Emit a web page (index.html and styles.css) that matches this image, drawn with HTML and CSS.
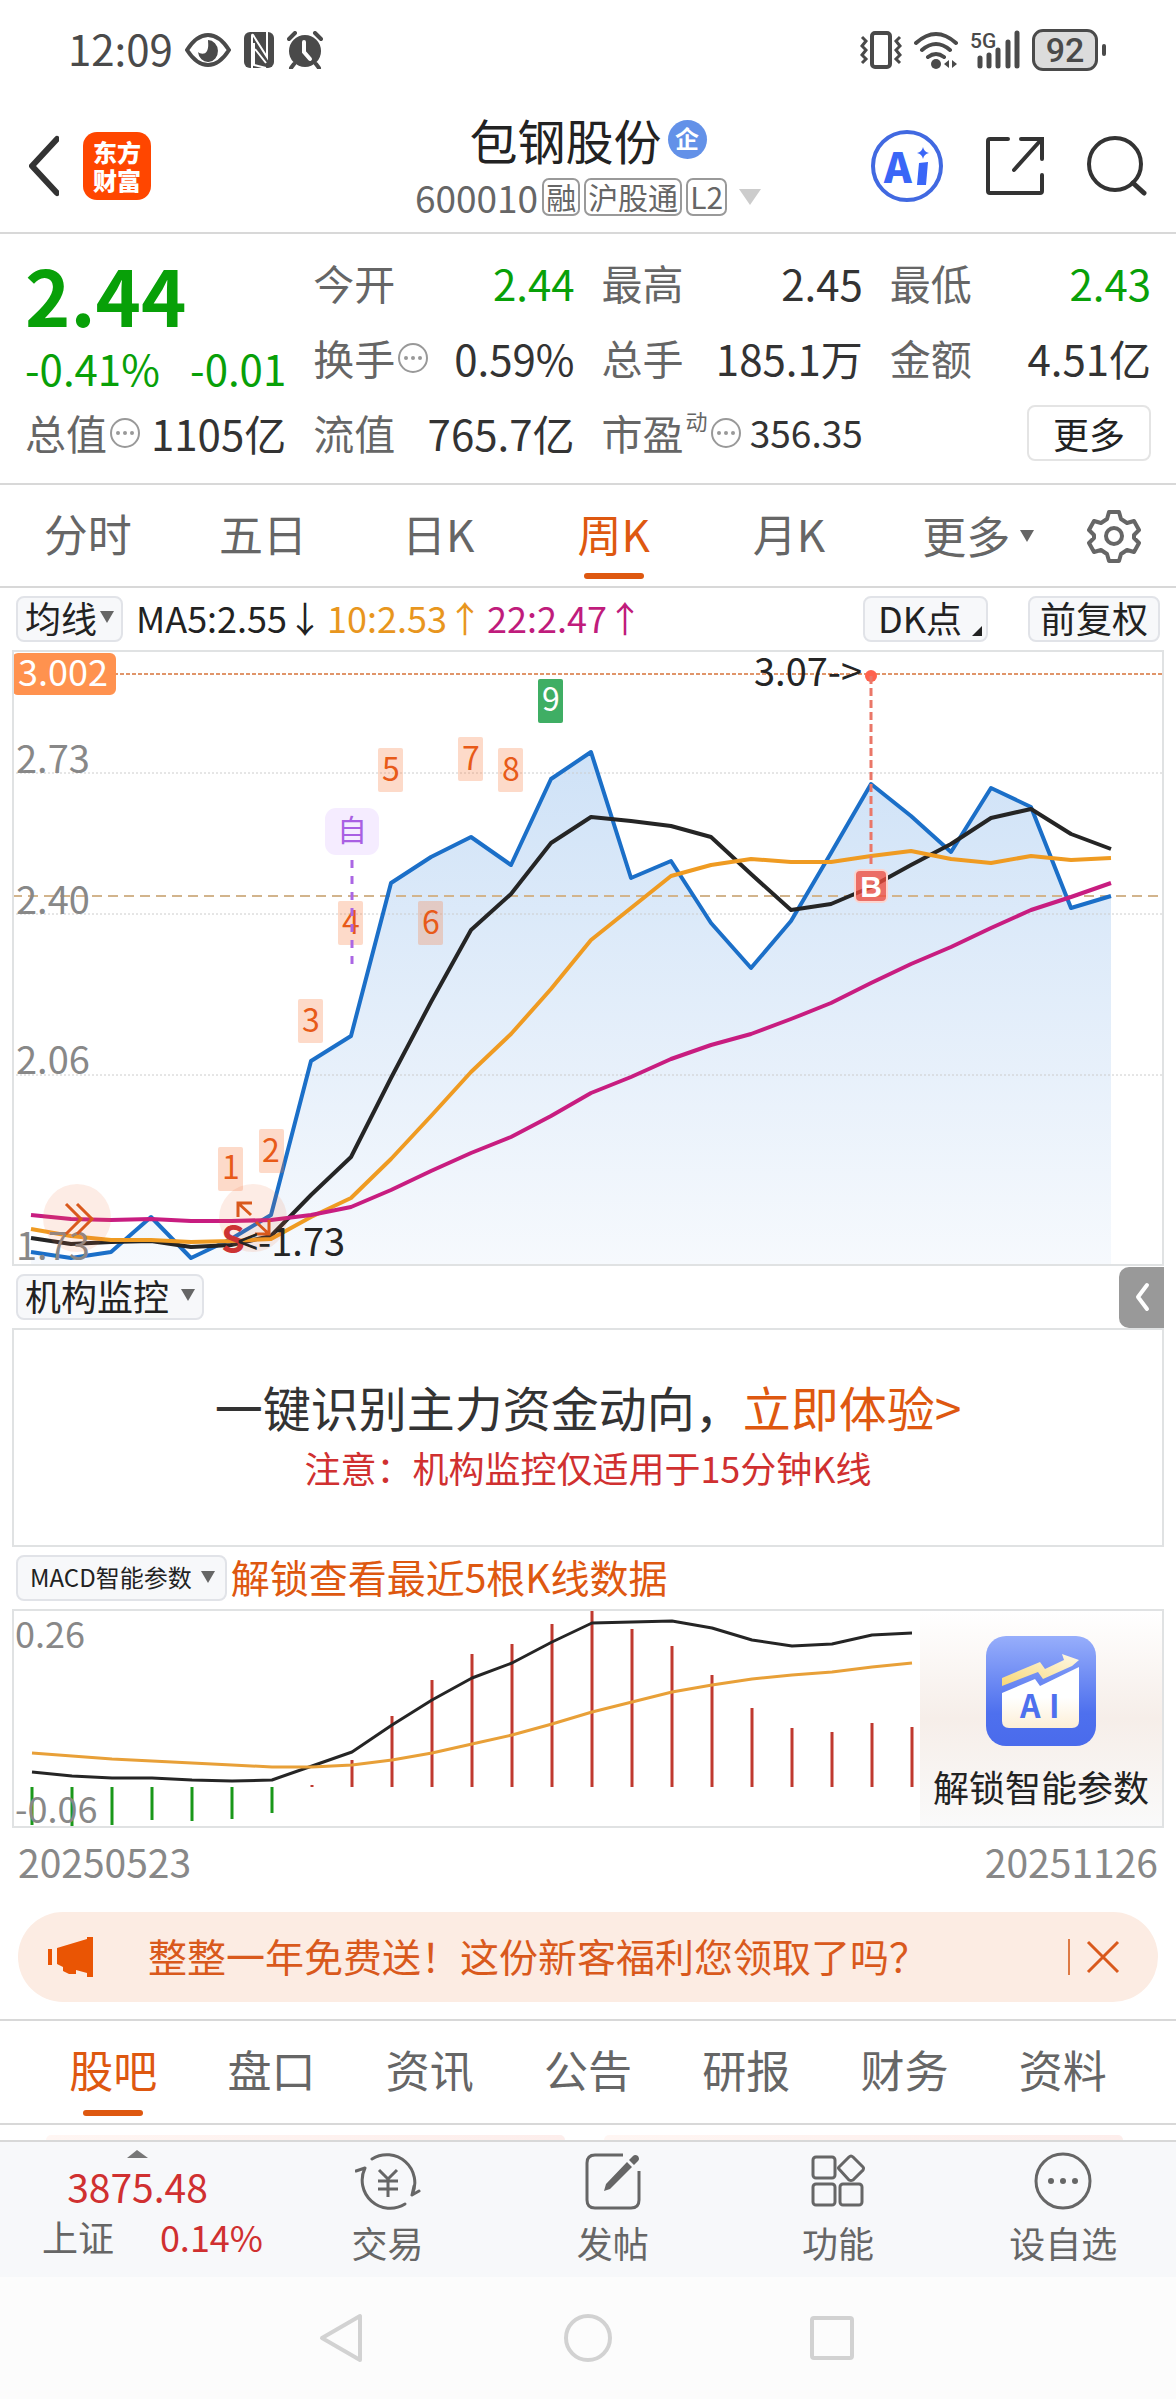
FILE: index.html
```html
<!DOCTYPE html>
<html lang="zh-CN">
<head>
<meta charset="utf-8">
<meta name="viewport" content="width=device-width, initial-scale=1">
<title>包钢股份 600010</title>
<link rel="stylesheet" href="styles.css">
</head>
<body>
<svg class="defs" aria-hidden="true">
  <symbol id="info" viewBox="0 0 32 32"><circle cx="16" cy="16" r="14" fill="none" stroke="#999" stroke-width="2"/><circle cx="9" cy="16" r="2" fill="#999"/><circle cx="16" cy="16" r="2" fill="#999"/><circle cx="23" cy="16" r="2" fill="#999"/></symbol>
  <symbol id="caret" viewBox="0 0 14 12"><path d="M0 0h14L7 12z" fill="#666"/></symbol>
</svg>

<div class="status">
  <div class="status-side">
    <span class="clock">12:09</span>
    <svg width="46" height="36" viewBox="0 0 46 36"><path d="M2 18C9 7 16 3 23 3s14 4 21 15c-7 11-14 15-21 15S9 29 2 18z" fill="none" stroke="#4a4a4a" stroke-width="4"/><path d="M23 8a10 11 0 1 1-10 12c2 2 7 3 9-1 2-4 1-8 1-11z" fill="#4a4a4a"/></svg>
    <svg width="32" height="38" viewBox="0 0 32 38"><rect x="1" y="1" width="30" height="36" rx="6" fill="#4a4a4a"/><path d="M9 37V5q0-2 1-1l14 22V1" fill="none" stroke="#fff" stroke-width="2"/><path d="M11 12v22l12 3M12 18l11 14" fill="none" stroke="#fff" stroke-width="2"/></svg>
    <svg width="36" height="38" viewBox="0 0 36 38"><circle cx="18" cy="20" r="16" fill="#4a4a4a"/><path d="M2 8l6-6M34 8l-6-6M7 33l-3 4M29 33l3 4" stroke="#4a4a4a" stroke-width="4" stroke-linecap="round"/><path d="M17 11v10l6 7" fill="none" stroke="#fff" stroke-width="4" stroke-linecap="round"/></svg>
  </div>
  <div class="status-side">
    <svg width="42" height="40" viewBox="0 0 42 40"><rect x="12" y="3" width="18" height="34" rx="3" fill="none" stroke="#4a4a4a" stroke-width="4"/><path d="M2 7l4 4-4 5 4 4-4 5 4 4-4 4M40 7l-4 4 4 5-4 4 4 5-4 4 4 4" fill="none" stroke="#4a4a4a" stroke-width="3"/></svg>
    <svg width="44" height="40" viewBox="0 0 44 40"><path d="M2 13q20-18 40 0M8 20q14-12 28 0M14 27q8-6 16 0" fill="none" stroke="#4a4a4a" stroke-width="4" stroke-linecap="round"/><circle cx="22" cy="34" r="5" fill="#4a4a4a"/><path d="M35 30v8l-5-4zM38 30v8l5-4z" fill="#4a4a4a"/></svg>
    <svg width="50" height="40" viewBox="0 0 50 40"><text x="0" y="18" class="net">5G</text><path d="M10 28v8M19 25v11M28 20v16M38 12v24M47 3v33" stroke="#4a4a4a" stroke-width="5" stroke-linecap="round"/></svg>
    <span class="battery">92</span><i class="battery-cap"></i>
  </div>
</div>

<header class="head">
  <div class="head-left">
    <button class="icon-btn" aria-label="返回"><svg width="30" height="62" viewBox="4 0 30 62"><path d="M30 4L5 31l25 27" fill="none" stroke="#333" stroke-width="6" stroke-linecap="round" stroke-linejoin="round" transform="translate(2 0)"/></svg></button>
    <a class="logo" href="#">东方<br>财富</a>
  </div>
  <div class="head-mid">
    <h1>包钢股份<span class="corp">企</span></h1>
    <p class="code">600010<span class="tag">融</span><span class="tag">沪股通</span><span class="tag">L2</span><svg width="22" height="16" viewBox="0 0 22 16"><path d="M0 0h22L11 16z" fill="#ccc"/></svg></p>
  </div>
  <div class="head-right">
    <button class="icon-btn" aria-label="AI"><svg width="72" height="72" viewBox="0 0 72 72"><circle cx="36" cy="36" r="34" fill="none" stroke="#4169e1" stroke-width="4"/><text x="13" y="53" class="ai">A</text><path d="M48 33l9-1-2 23h-9z" fill="#3a66f7"/><path d="M52 17q1 5 6 6-5 1-6 6-1-5-6-6 5-1 6-6z" fill="#3a66f7"/></svg></button>
    <button class="icon-btn" aria-label="分享"><svg width="58" height="60" viewBox="0 0 58 60"><path d="M22 3H4q-2 0-2 2v50q0 2 2 2h50q2 0 2-2V39M35 3h21v20M54 5L28 34" fill="none" stroke="#333" stroke-width="4" stroke-linecap="round"/></svg></button>
    <button class="icon-btn" aria-label="搜索"><svg width="60" height="60" viewBox="0 0 60 60"><circle cx="28" cy="28" r="26" fill="none" stroke="#333" stroke-width="4"/><path d="M46 47l11 10" stroke="#333" stroke-width="5" stroke-linecap="round"/></svg></button>
  </div>
</header>

<section class="quote">
  <div class="price">
    <strong>2.44</strong>
    <p><span>-0.41%</span><span>-0.01</span></p>
  </div>
  <div class="stat"><span>今开</span><b class="down">2.44</b></div>
  <div class="stat"><span>最高</span><b>2.45</b></div>
  <div class="stat"><span>最低</span><b class="down">2.43</b></div>
  <div class="stat"><span>换手<svg class="info"><use href="#info"/></svg></span><b>0.59%</b></div>
  <div class="stat"><span>总手</span><b>185.1万</b></div>
  <div class="stat"><span>金额</span><b>4.51亿</b></div>
  <div class="stat"><span>总值<svg class="info"><use href="#info"/></svg></span><b>1105亿</b></div>
  <div class="stat"><span>流值</span><b>765.7亿</b></div>
  <div class="stat"><span>市盈<sup>动</sup><svg class="info"><use href="#info"/></svg></span><b class="small">356.35</b></div>
  <div class="stat end"><button class="more">更多</button></div>
</section>

<nav class="periods">
  <a href="#">分时</a><a href="#">五日</a><a href="#">日K</a><a href="#" class="on">周K</a><a href="#">月K</a>
  <a href="#" class="wide">更多<svg class="caret"><use href="#caret"/></svg></a>
  <button class="icon-btn" aria-label="设置"><svg width="54" height="54" viewBox="0 0 54 54"><path d="M22 3h10l2 7 6 4 7-2 5 9-5 5v3l5 5-5 9-7-2-6 4-2 7H22l-2-7-6-4-7 2-5-9 5-5v-3l-5-5 5-9 7 2 6-4z" fill="none" stroke="#666" stroke-width="4" stroke-linejoin="round"/><circle cx="27" cy="27" r="8" fill="none" stroke="#666" stroke-width="4"/></svg></button>
</nav>

<div class="bar">
  <button class="chip">均线<svg class="caret"><use href="#caret"/></svg></button>
  <p class="ma"><span>MA5:2.55↓</span><span class="c-orange">10:2.53↑</span><span class="c-pink">22:2.47↑</span></p>
  <button class="chip dk">DK点<svg width="10" height="10" viewBox="0 0 10 10"><path d="M10 0v10H0z" fill="#222"/></svg></button>
  <button class="chip adj">前复权</button>
</div>

<div class="panel">
  <svg class="plot" viewBox="14 653 1148 612" role="img" aria-label="周K走势">
    <defs><linearGradient id="fill" x1="0" y1="753" x2="0" y2="1265" gradientUnits="userSpaceOnUse"><stop offset="0" stop-color="#cfe2f7"/><stop offset="1" stop-color="#f6f9fd"/></linearGradient></defs>
    <path d="M31 1253 71 1259 111 1253 151 1218 191 1259 231 1240 271 1216 311 1062 351 1037 391 884 431 858 471 838 511 866 551 780 591 753 631 879 671 862 711 924 751 969 791 922 831 854 871 785 911 817 951 853 991 789 1031 808 1071 909 1111 897V1265H31z" fill="url(#fill)"/>
    <path d="M12 774H1162M12 915H1162M12 1076H1162" stroke="#ccc" stroke-width="1" stroke-dasharray="2 2"/>
    <path d="M12 675H1162" stroke="#e0956a" stroke-width="2" stroke-dasharray="4 2"/>
    <path d="M12 897H1162" stroke="#d2b48c" stroke-width="2" stroke-dasharray="10 6"/>
    <g fill="none" stroke-width="4" stroke-linejoin="round">
      <path stroke="#1b6fc8" d="M31 1253 71 1259 111 1253 151 1218 191 1259 231 1240 271 1216 311 1062 351 1037 391 884 431 858 471 838 511 866 551 780 591 753 631 879 671 862 711 924 751 969 791 922 831 854 871 785 911 817 951 853 991 789 1031 808 1071 909 1111 897"/>
      <path stroke="#252525" d="M31 1239 71 1245 111 1243 151 1242 191 1248 231 1246 271 1237 311 1196 351 1158 391 1079 431 1003 471 931 511 895 551 844 591 818 631 822 671 827 711 838 751 875 791 911 831 905 871 888 911 866 951 845 991 819 1031 810 1071 835 1111 850"/>
      <path stroke="#ef9b22" d="M31 1230 71 1237 111 1241 151 1241 191 1243 231 1242 271 1240 311 1218 351 1199 391 1160 431 1117 471 1073 511 1035 551 990 591 941 631 909 671 877 711 866 751 860 791 863 831 863 871 857 911 852 951 860 991 864 1031 857 1071 861 1111 859"/>
      <path stroke="#c81d80" d="M31 1216 71 1220 111 1221 151 1220 191 1222 231 1222 271 1221 311 1216 351 1208 391 1191 431 1172 471 1154 511 1138 551 1117 591 1094 631 1078 671 1060 711 1046 751 1035 791 1020 831 1004 871 984 911 965 951 948 991 929 1031 911 1071 898 1111 884"/>
    </g>
    <g class="axis"><text x="16" y="774">2.73</text><text x="16" y="915">2.40</text><text x="16" y="1075">2.06</text><text x="16" y="1261">1.73</text></g>
    <rect x="12" y="654" width="104" height="42" rx="6" fill="#ff924f"/><text x="18" y="687" class="limit">3.002</text>
    <g fill="#f97b3c" fill-opacity=".28"><rect x="218" y="1148" width="25" height="44" rx="2"/><rect x="259" y="1130" width="25" height="44" rx="2"/><rect x="298" y="1000" width="25" height="44" rx="2"/><rect x="338" y="902" width="25" height="44" rx="2"/><rect x="378" y="749" width="25" height="44" rx="2"/><rect x="418" y="902" width="25" height="44" rx="2"/><rect x="458" y="738" width="25" height="44" rx="2"/><rect x="498" y="749" width="25" height="44" rx="2"/></g>
    <rect x="538" y="680" width="25" height="44" rx="2" fill="#3fae64"/>
    <g class="seq"><text x="231" y="1180">1</text><text x="271" y="1163">2</text><text x="311" y="1033">3</text><text x="351" y="935">4</text><text x="391" y="782">5</text><text x="431" y="935">6</text><text x="471" y="771">7</text><text x="511" y="782">8</text><text x="551" y="712" fill="#fff">9</text></g>
    <rect x="325" y="809" width="54" height="47" rx="11" fill="#f5ecff"/><text x="352" y="842" class="own">自</text>
    <path d="M352 861V965" stroke="#ab66e4" stroke-width="3" stroke-dasharray="8 8"/>
    <g fill="#ee6b35" fill-opacity=".13"><circle cx="77" cy="1219" r="34"/><circle cx="253" cy="1219" r="34"/></g>
    <text x="233" y="1254" class="sell">S</text>
    <path d="M66 1205l15 15-15 15M77 1205l15 15-15 15M251 1216l-13-12M238 1218v-14h14M256 1223l13 12M269 1221v14h-14" fill="none" stroke="#d9591c" stroke-width="3"/>
    <text x="237" y="1257" class="mark">&lt;-1.73</text>
    <text x="754" y="687" class="mark">3.07-&gt;</text>
    <circle cx="871" cy="677" r="6" fill="#ff624d"/>
    <path d="M871 677V866" stroke="#ea7768" stroke-width="3" stroke-dasharray="8 4"/>
    <rect x="855" y="871" width="32" height="32" rx="5" fill="#f04c3c" fill-opacity=".78" stroke="#fbd5cf" stroke-width="2"/><text x="871" y="898" class="buy">B</text>
  </svg>
</div>

<div class="bar">
  <button class="chip">机构监控<svg class="caret far"><use href="#caret"/></svg></button>
  <button class="drawer" aria-label="展开"><svg width="16" height="30" viewBox="0 0 16 30"><path d="M13 3L4 15l9 12" fill="none" stroke="#fff" stroke-width="4" stroke-linecap="round" stroke-linejoin="round"/></svg></button>
</div>

<section class="panel promo">
  <p class="lead">一键识别主力资金动向，<a href="#">立即体验&gt;</a></p>
  <p class="warn">注意：机构监控仅适用于15分钟K线</p>
</section>

<div class="bar">
  <button class="chip tiny">MACD智能参数<svg class="caret"><use href="#caret"/></svg></button>
  <a class="unlock-link" href="#">解锁查看最近5根K线数据</a>
</div>

<div class="panel macd">
  <svg class="plot" viewBox="14 1613 906 215" role="img" aria-label="MACD">
    <path d="M32 1789V1827M72 1789V1828M112 1789V1827M152 1789V1822M192 1789V1823M232 1789V1821M272 1789V1815" stroke="#1a981a" stroke-width="3"/>
    <path d="M312 1789V1787M352 1789V1762M392 1789V1718M432 1789V1682M472 1789V1656M512 1789V1646M552 1789V1626M592 1789V1611M632 1789V1631M672 1789V1648M712 1789V1677M752 1789V1710M792 1789V1730M832 1789V1734M872 1789V1725M912 1789V1729" stroke="#c0392f" stroke-width="3"/>
    <g fill="none" stroke-width="3" stroke-linejoin="round">
      <path stroke="#252525" d="M32 1774 72 1778 112 1780 152 1780 192 1782 232 1783 272 1782 312 1768 352 1754 392 1727 432 1702 472 1680 512 1665 552 1644 592 1625 632 1624 672 1623 712 1630 752 1642 792 1648 832 1646 872 1637 912 1635"/>
      <path stroke="#e8a038" d="M32 1755 72 1758 112 1761 152 1763 192 1765 232 1767 272 1769 312 1769 352 1767 392 1762 432 1755 472 1746 512 1737 552 1726 592 1714 632 1704 672 1694 712 1687 752 1681 792 1677 832 1674 872 1669 912 1665"/>
    </g>
    <g class="axis small"><text x="15" y="1650">0.26</text><text x="15" y="1825">-0.06</text></g>
  </svg>
  <a class="unlock" href="#">
    <svg width="110" height="110" viewBox="0 0 110 110">
      <defs><linearGradient id="tile" x1="0" y1="0" x2="0" y2="1"><stop offset="0" stop-color="#97aefb"/><stop offset=".7" stop-color="#4e70ee"/><stop offset="1" stop-color="#4a6bec"/></linearGradient><linearGradient id="page" x1="0" y1="0" x2="0" y2="1"><stop offset=".5" stop-color="#fff"/><stop offset="1" stop-color="#fdefd6"/></linearGradient><linearGradient id="gold" x1="0" y1="1" x2="1" y2="0"><stop offset="0" stop-color="#f8d877"/><stop offset="1" stop-color="#fff9e8"/></linearGradient></defs>
      <rect width="110" height="110" rx="20" fill="url(#tile)"/>
      <path d="M16 57l33-14 5 7 39-19v54q0 7-7 7H23q-7 0-7-7z" fill="url(#page)"/>
      <path d="M16 42l38-16 5 7 19-9-2-6 17 6-7 6-29 13-5-7-36 14z" fill="url(#gold)"/>
      <text x="34" y="82" class="tile-ai">A</text><text x="63" y="82" class="tile-ai">I</text>
    </svg>
    <span>解锁智能参数</span>
  </a>
</div>

<div class="dates"><time>20250523</time><time>20251126</time></div>

<aside class="banner">
  <svg width="48" height="40" viewBox="0 0 48 40"><path d="M1 12h4v16H1zM10 11L40 2V0h6v40h-6v-4l-11-3v4h-7l-6-3v-4l-6-3z" fill="#ea5504"/></svg>
  <a href="#">整整一年免费送！这份新客福利您领取了吗？</a>
  <i></i>
  <button class="icon-btn" aria-label="关闭"><svg width="34" height="34" viewBox="0 0 34 34"><path d="M2 2l30 30M32 2L2 32" stroke="#d9591c" stroke-width="3"/></svg></button>
</aside>

<nav class="tabs"><a href="#" class="on">股吧</a><a href="#">盘口</a><a href="#">资讯</a><a href="#">公告</a><a href="#">研报</a><a href="#">财务</a><a href="#">资料</a></nav>
<div class="peek"><i></i><i></i></div>

<footer class="dock">
  <a class="index" href="#">
    <svg width="21" height="8" viewBox="0 0 21 8"><path d="M0 8h21L10 0z" fill="#777"/></svg>
    <span class="idx">3875.48</span>
    <span class="row"><em>上证</em><span>0.14%</span></span>
  </a>
  <a href="#"><svg width="66" height="60" viewBox="0 0 66 60"><g fill="none" stroke="#666" stroke-width="3" stroke-linecap="round" stroke-linejoin="round"><path d="M17 8A28 28 0 0 1 57 44l7-4M57 44l2-9"/><path d="M50 53A28 28 0 0 1 10 17l-9 3"/><path d="M24 19l9 9 9-9M33 28v18M23 30h20M23 38h20" stroke-linecap="butt"/></g></svg>交易</a>
  <a href="#"><svg width="56" height="60" viewBox="0 0 56 60"><path d="M38 4H10q-8 0-8 8v37q0 8 8 8h36q8 0 8-8V20" fill="none" stroke="#666" stroke-width="3"/><path d="M42 11l5 5-22 22-6 2 2-7zM44 9l4-4q2-2 5 0 2 3 0 5l-4 4z" fill="#666"/></svg>发帖</a>
  <a href="#"><svg width="54" height="60" viewBox="0 0 54 60"><g fill="none" stroke="#666" stroke-width="3"><rect x="2" y="6" width="22" height="21" rx="3"/><rect x="2" y="33" width="22" height="21" rx="3"/><rect x="29" y="33" width="22" height="21" rx="3"/><path d="M38 6q2-2 4 0l10 10q1 1 0 3L42 29q-2 1-4 0L28 18q-1-1 0-2z"/></g></svg>功能</a>
  <a href="#"><svg width="58" height="60" viewBox="0 0 58 60"><circle cx="29" cy="30" r="27" fill="none" stroke="#666" stroke-width="3"/><circle cx="17" cy="30" r="3" fill="#666"/><circle cx="29" cy="30" r="3" fill="#666"/><circle cx="41" cy="30" r="3" fill="#666"/></svg>设自选</a>
</footer>

<div class="sysnav">
  <button class="icon-btn" aria-label="后退"><svg width="52" height="52" viewBox="0 0 52 52"><path d="M42 4v44L4 26z" fill="none" stroke="#d2d2d2" stroke-width="4" stroke-linejoin="round"/></svg></button>
  <button class="icon-btn" aria-label="主页"><svg width="52" height="52" viewBox="0 0 52 52"><circle cx="26" cy="26" r="22" fill="none" stroke="#d2d2d2" stroke-width="4"/></svg></button>
  <button class="icon-btn" aria-label="最近"><svg width="52" height="52" viewBox="0 0 52 52"><rect x="6" y="6" width="40" height="40" rx="2" fill="none" stroke="#d2d2d2" stroke-width="4"/></svg></button>
</div>
</body>
</html>
```
FILE: styles.css
```css
* { box-sizing: border-box; margin: 0; padding: 0; }
body { background: #fff; color: #222; font-family: "Noto Sans CJK SC", "Noto Sans", sans-serif; font-size: 36px; line-height: 1; }
a { color: inherit; text-decoration: none; }
button { font: inherit; color: inherit; background: none; border: 0; }
svg { display: block; flex: none; }
.defs { position: absolute; width: 0; height: 0; }
.icon-btn { display: flex; align-items: center; justify-content: center; flex: none; }

/* system status bar */
.status { display: flex; justify-content: space-between; align-items: center; height: 100px; padding: 0 70px 0 68px; color: #4a4a4a; }
.status-side { display: flex; align-items: center; gap: 12px; }
.clock { font-size: 42px; line-height: 46px; padding-bottom: 4px; }
.net { font: 500 21px Roboto, sans-serif; fill: #4a4a4a; }
.battery { width: 66px; height: 42px; border: 3px solid #4a4a4a; border-radius: 11px; background: #dcdcdc; font: 500 34px/36px Roboto, sans-serif; text-align: center; }
.battery-cap { width: 4px; height: 12px; margin-left: -8px; border-radius: 2px; background: #4a4a4a; }

/* title bar */
.head { display: grid; grid-template-columns: 1fr auto 1fr; align-items: center; height: 134px; padding: 0 29px; border-bottom: 2px solid #d8d8d8; }
.head-left, .head-right { display: flex; align-items: center; }
.head-left { gap: 24px; }
.head-right { justify-content: flex-end; gap: 43px; }
.logo { width: 68px; height: 68px; padding-top: 6px; border-radius: 14px; background: #ff4600; color: #fff; font-size: 24px; line-height: 28px; font-weight: 900; text-align: center; }
.head-mid { display: flex; flex-direction: column; align-items: center; gap: 10px; }
.head-mid h1 { display: flex; align-items: center; gap: 6px; font-size: 48px; line-height: 52px; font-weight: 400; }
.corp { width: 39px; height: 39px; border-radius: 50%; background: #6391e8; color: #fff; font-size: 24px; line-height: 36px; font-weight: 700; text-align: center; }
.code { display: flex; align-items: center; gap: 4px; color: #666; font-size: 37px; line-height: 44px; }
.tag { height: 38px; padding: 0 2px; border: 2px solid #999; border-radius: 7px; font-size: 30px; line-height: 32px; }
.code svg { margin-left: 8px; }
.ai { font: 900 42px "Noto Sans CJK SC", sans-serif; fill: #3a66f7; }

/* quote grid */
.quote { display: grid; grid-template-columns: repeat(4, 1fr); grid-auto-rows: 75px; column-gap: 27px; padding: 11px 25px 13px 25px; border-bottom: 2px solid #d8d8d8; font-size: 42px; }
.price { grid-row: span 2; color: #08a008; white-space: nowrap; }
.price strong { display: block; font-size: 77px; line-height: 98px; }
.price p { display: flex; justify-content: space-between; line-height: 50px; }
.stat { display: flex; align-items: center; justify-content: space-between; white-space: nowrap; color: #666; }
.stat > span { display: flex; align-items: center; gap: 2px; font-size: 41px; }
.stat b { font-weight: 400; color: #333; }
.stat b.down { color: #08a008; }
.stat b.small { font-size: 37px; }
.stat.end { justify-content: flex-end; }
.stat sup { align-self: flex-start; font-size: 22px; line-height: 16px; }
.info { width: 32px; height: 32px; }
.more { width: 124px; height: 56px; border: 2px solid #e4e4e4; border-radius: 8px; font-size: 36px; line-height: 46px; color: #222; }

/* period tabs */
.periods { display: grid; grid-template-columns: repeat(6, 1fr) 124px; height: 103px; border-bottom: 2px solid #d8d8d8; color: #666; font-size: 44px; }
.periods a, .tabs a { position: relative; flex: 1; text-align: center; line-height: 97px; }
.periods a.wide { display: flex; align-items: center; justify-content: center; gap: 10px; padding-left: 28px; }
.on { color: #de5810; }
.on::after { content: ""; position: absolute; left: 50%; bottom: 7px; width: 60px; height: 6px; margin-left: -30px; border-radius: 3px; background: #de5810; }
.caret { width: 14px; height: 12px; }

/* indicator bars */
.bar { display: flex; align-items: center; height: 62px; padding: 0 12px 0 16px; }
.chip { display: flex; align-items: center; gap: 3px; flex: none; height: 46px; padding: 0 7px 4px; border: 2px solid #e1e3e8; border-radius: 8px; background: #f7f8fa; font-size: 36px; line-height: 40px; color: #222; }
.chip .far { margin-left: 9px; }
.chip.tiny { padding: 0 10px 2px 12px; gap: 9px; font-size: 24px; }
.chip.dk { margin-right: 40px; padding: 0 4px 4px 13px; }
.chip.dk svg { align-self: flex-end; margin-left: 7px; }
.chip.adj { margin-right: 4px; padding: 0 10px 4px; }
.ma { display: flex; flex: 1; gap: 4px; padding: 0 0 4px 13px; white-space: nowrap; line-height: 40px; }
.c-orange { color: #e8961e; }
.c-pink { color: #c01c7c; }
.drawer { display: flex; align-items: center; justify-content: center; width: 45px; height: 61px; margin-left: auto; border-radius: 10px 0 0 10px; background: #999; }
.unlock-link { padding: 0 0 4px 4px; color: #de5810; font-size: 39px; line-height: 44px; }

/* charts */
.panel { margin: 0 12px; border: 2px solid #e0e2e3; }
.plot { width: 100%; height: auto; flex: 1; min-width: 0; }
.plot text { font-size: 38px; }
.plot .axis text { fill: #888; }
.plot .axis.small text, .plot .limit { font-size: 36px; }
.plot .limit { fill: #fff; }
.plot .mark { fill: #252525; }
.plot .seq text { font-size: 32px; text-anchor: middle; }
.plot .seq { fill: #e85a18; }
.plot .own { font-size: 30px; text-anchor: middle; fill: #a95fe3; }
.plot .sell { font-weight: 700; text-anchor: middle; fill: #cc3333; }
.plot .buy { font: 700 30px "Liberation Sans", sans-serif; text-anchor: middle; fill: #fff; }
.promo { height: 219px; padding-top: 48px; text-align: center; }
.lead { font-size: 48px; line-height: 56px; color: #333; }
.lead a { color: #de5810; }
.warn { margin-top: 9px; font-size: 36px; line-height: 48px; color: #d03030; }
.macd { display: flex; }
.unlock { display: flex; flex-direction: column; align-items: center; gap: 20px; width: 242px; padding-top: 25px; background: linear-gradient(#fff, #f6eee9 50%, #fafafa); font-size: 36px; line-height: 40px; white-space: nowrap; }
.tile-ai { font: 700 32px "Noto Sans CJK SC", sans-serif; fill: #4e70ee; }
.dates { display: flex; justify-content: space-between; padding: 8px 18px 26px; color: #888; font-size: 39px; line-height: 50px; }

/* banner and content tabs */
.banner { display: flex; align-items: center; height: 90px; margin: 0 18px 17px; padding: 0 38px 0 29px; border-radius: 45px; background: #fcece3; color: #d9591c; }
.banner a { flex: 1; padding: 0 0 4px 53px; font-size: 39px; line-height: 48px; }
.banner i { width: 2px; height: 36px; margin-right: 16px; background: #dd7a45; }
.tabs { display: flex; height: 106px; padding: 0 34px; border-top: 2px solid #d8d8d8; border-bottom: 2px solid #d8d8d8; color: #666; font-size: 44px; }
.peek { display: flex; gap: 39px; padding: 10px 53px 0 46px; border-bottom: 2px solid #d8d8d8; }
.peek i { flex: 1; height: 5px; border-radius: 12px 12px 0 0; background: linear-gradient(90deg, #fff6f3, #fdeeec); }

/* bottom dock */
.dock { display: flex; height: 135px; background: #f7f8fa; color: #666; font-size: 36px; }
.dock > a { display: flex; flex: 1; flex-direction: column; align-items: center; gap: 7px; padding-top: 9px; line-height: 48px; }
.dock .index { flex: 0 0 275px; padding-top: 8px; }
.idx { font-size: 39px; line-height: 42px; color: #d03030; }
.row { display: flex; justify-content: space-between; width: 100%; padding: 0 12px 0 42px; line-height: 44px; }
.row em { font-style: normal; }
.row span { color: #d03030; }
.sysnav { display: flex; justify-content: center; align-items: flex-start; gap: 192px; height: 122px; padding-top: 35px; background: #fcfcfc; }
```
